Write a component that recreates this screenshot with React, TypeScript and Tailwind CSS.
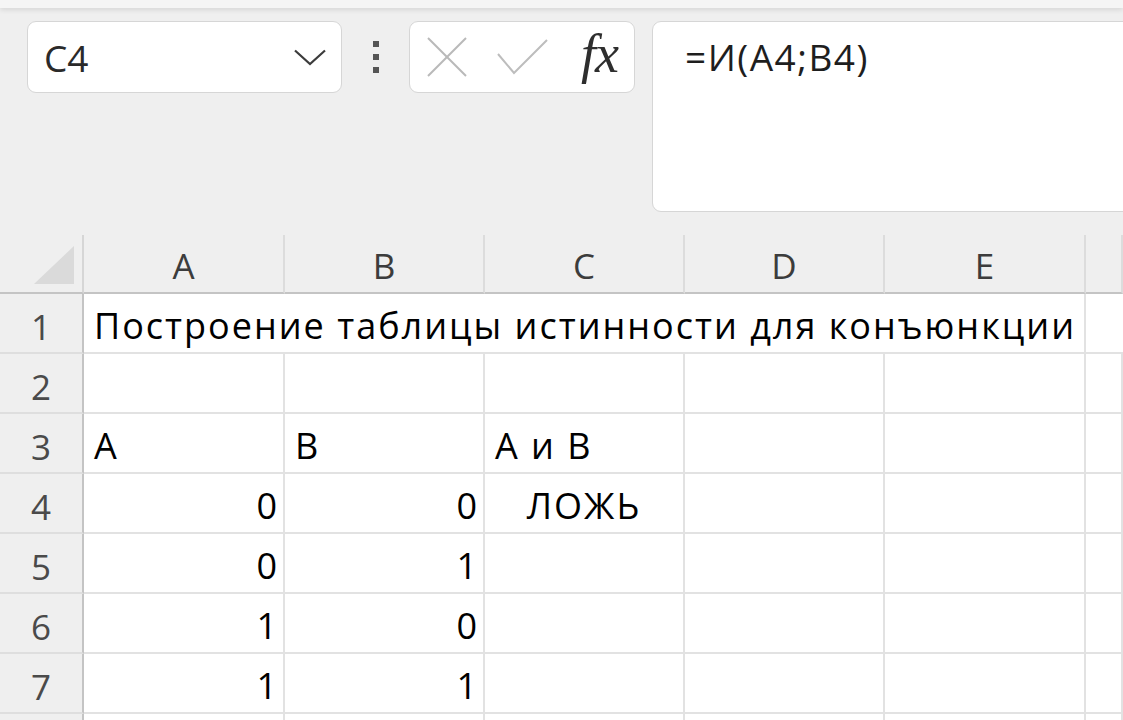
const font = "font-['Open_Sans','Noto_Sans',sans-serif]";

type Cell = { text?: string; align?: 'left' | 'right' | 'center' };

const rows: { n: number | null; cells: Cell[] }[] = [
  { n: 2, cells: [{}, {}, {}, {}, {}, {}] },
  { n: 3, cells: [{ text: 'A' }, { text: 'B' }, { text: 'A и B' }, {}, {}, {}] },
  { n: 4, cells: [{ text: '0', align: 'right' }, { text: '0', align: 'right' }, { text: 'ЛОЖЬ', align: 'center' }, {}, {}, {}] },
  { n: 5, cells: [{ text: '0', align: 'right' }, { text: '1', align: 'right' }, {}, {}, {}, {}] },
  { n: 6, cells: [{ text: '1', align: 'right' }, { text: '0', align: 'right' }, {}, {}, {}, {}] },
  { n: 7, cells: [{ text: '1', align: 'right' }, { text: '1', align: 'right' }, {}, {}, {}, {}] },
  { n: null, cells: [{}, {}, {}, {}, {}, {}] },
];

const gridCols = 'grid grid-cols-[84px_201px_200px_200px_200px_201px_1fr]';

function RowHead({ n }: { n: number | null }) {
  return (
    <div className="h-[60px] flex items-end justify-center pb-[8px] border-r-2 border-r-[#c4c4c4] border-b-2 border-b-[#dedede] bg-[#efefef] text-[35px] leading-none text-[#4a4a4a]">
      {n}
    </div>
  );
}

function GridCell({ cell }: { cell: Cell }) {
  const justify =
    cell.align === 'right' ? 'justify-end pr-[4px]' : cell.align === 'center' ? 'justify-center' : 'justify-start pl-[10px]';
  return (
    <div className={`h-[60px] flex items-end pb-[8px] bg-white border-r-2 border-b-2 border-[#e2e2e2] text-[36px] tracking-[2px] leading-none text-black whitespace-nowrap ${justify}`}>
      {cell.text}
    </div>
  );
}

export default function App() {
  return (
    <div className={`w-[1123px] h-[720px] overflow-hidden bg-[#efefef] ${font}`}>
      {/* ribbon edge */}
      <div className="h-[8px] bg-[#f5f5f5] shadow-[0_2px_5px_rgba(0,0,0,0.10)]" />

      {/* formula bar */}
      <div className="h-[227px] flex items-start pt-[13px] pl-[27px]">
        <div className="shrink-0 w-[315px] h-[72px] rounded-[9px] border border-[#d6d6d6] bg-white flex items-center justify-between pl-[16px] pr-[15px]">
          <span className="text-[37px] leading-none text-[#2a2a2a]">C4</span>
          <svg width="32" height="17" viewBox="0 0 32 17" fill="none">
            <polyline points="1,1.5 16,15 31,1.5" stroke="#3c3c3c" strokeWidth="2.2" />
          </svg>
        </div>

        <div className="shrink-0 w-[67px] h-[72px] flex flex-col items-center justify-center gap-[7px]">
          <span className="w-[6px] h-[6px] bg-[#555]" />
          <span className="w-[6px] h-[6px] bg-[#555]" />
          <span className="w-[6px] h-[6px] bg-[#555]" />
        </div>

        <div className="shrink-0 w-[226px] h-[72px] rounded-[9px] border border-[#d6d6d6] bg-white flex items-center pl-[17px] pr-[16px]">
          <svg width="40" height="40" viewBox="0 0 40 40" fill="none">
            <line x1="1" y1="1" x2="39" y2="39" stroke="#b9b9b9" strokeWidth="2" />
            <line x1="39" y1="1" x2="1" y2="39" stroke="#b9b9b9" strokeWidth="2" />
          </svg>
          <svg width="52" height="36" viewBox="0 0 52 36" fill="none" className="ml-[30px]">
            <polyline points="1,15 17,34 50,1" stroke="#bdbdbd" strokeWidth="2" />
          </svg>
          <span className="ml-auto font-['Liberation_Serif',serif] italic text-[54px] tracking-[-1px] leading-none text-[#2e2e2e] -mt-[6px]">fx</span>
        </div>

        <div className="shrink-0 ml-[17px] w-[500px] h-[191px] rounded-[9px] border border-[#d6d6d6] bg-white pl-[32px] pt-[16px]">
          <span className="text-[37px] tracking-[1.5px] leading-none text-[#1e1e1e]">=И(A4;B4)</span>
        </div>
      </div>

      {/* sheet */}
      <div className={gridCols}>
        <div className="h-[59px] flex items-end justify-end pr-[8px] pb-[8px] border-r-2 border-r-[#d6d6d6] border-b-2 border-b-[#c4c4c4] bg-[#efefef]">
          <svg width="40" height="38" viewBox="0 0 40 38">
            <polygon points="40,0 40,38 0,38" fill="#dadada" />
          </svg>
        </div>
        {['A', 'B', 'C', 'D', 'E', ''].map((c, i) => (
          <div
            key={i}
            className="h-[59px] flex items-end justify-center pb-[9px] bg-[#efefef] border-r-2 border-r-[#dcdcdc] border-b-2 border-b-[#c4c4c4] text-[35px] leading-none text-[#3c3c3c]"
          >
            {c}
          </div>
        ))}

        <RowHead n={1} />
        <div className="col-span-5 h-[60px] flex items-end pb-[8px] pl-[10px] bg-white border-r-2 border-b-2 border-[#e2e2e2] text-[36px] tracking-[2px] leading-none text-black whitespace-nowrap">
          Построение таблицы истинности для конъюнкции
        </div>
        <div className="h-[60px] bg-white border-b-2 border-[#e2e2e2]" />

        {rows.map((r, idx) => (
          <div key={idx} className="contents">
            <RowHead n={r.n} />
            {r.cells.map((c, i) => (
              <GridCell key={i} cell={c} />
            ))}
          </div>
        ))}
      </div>
    </div>
  );
}
